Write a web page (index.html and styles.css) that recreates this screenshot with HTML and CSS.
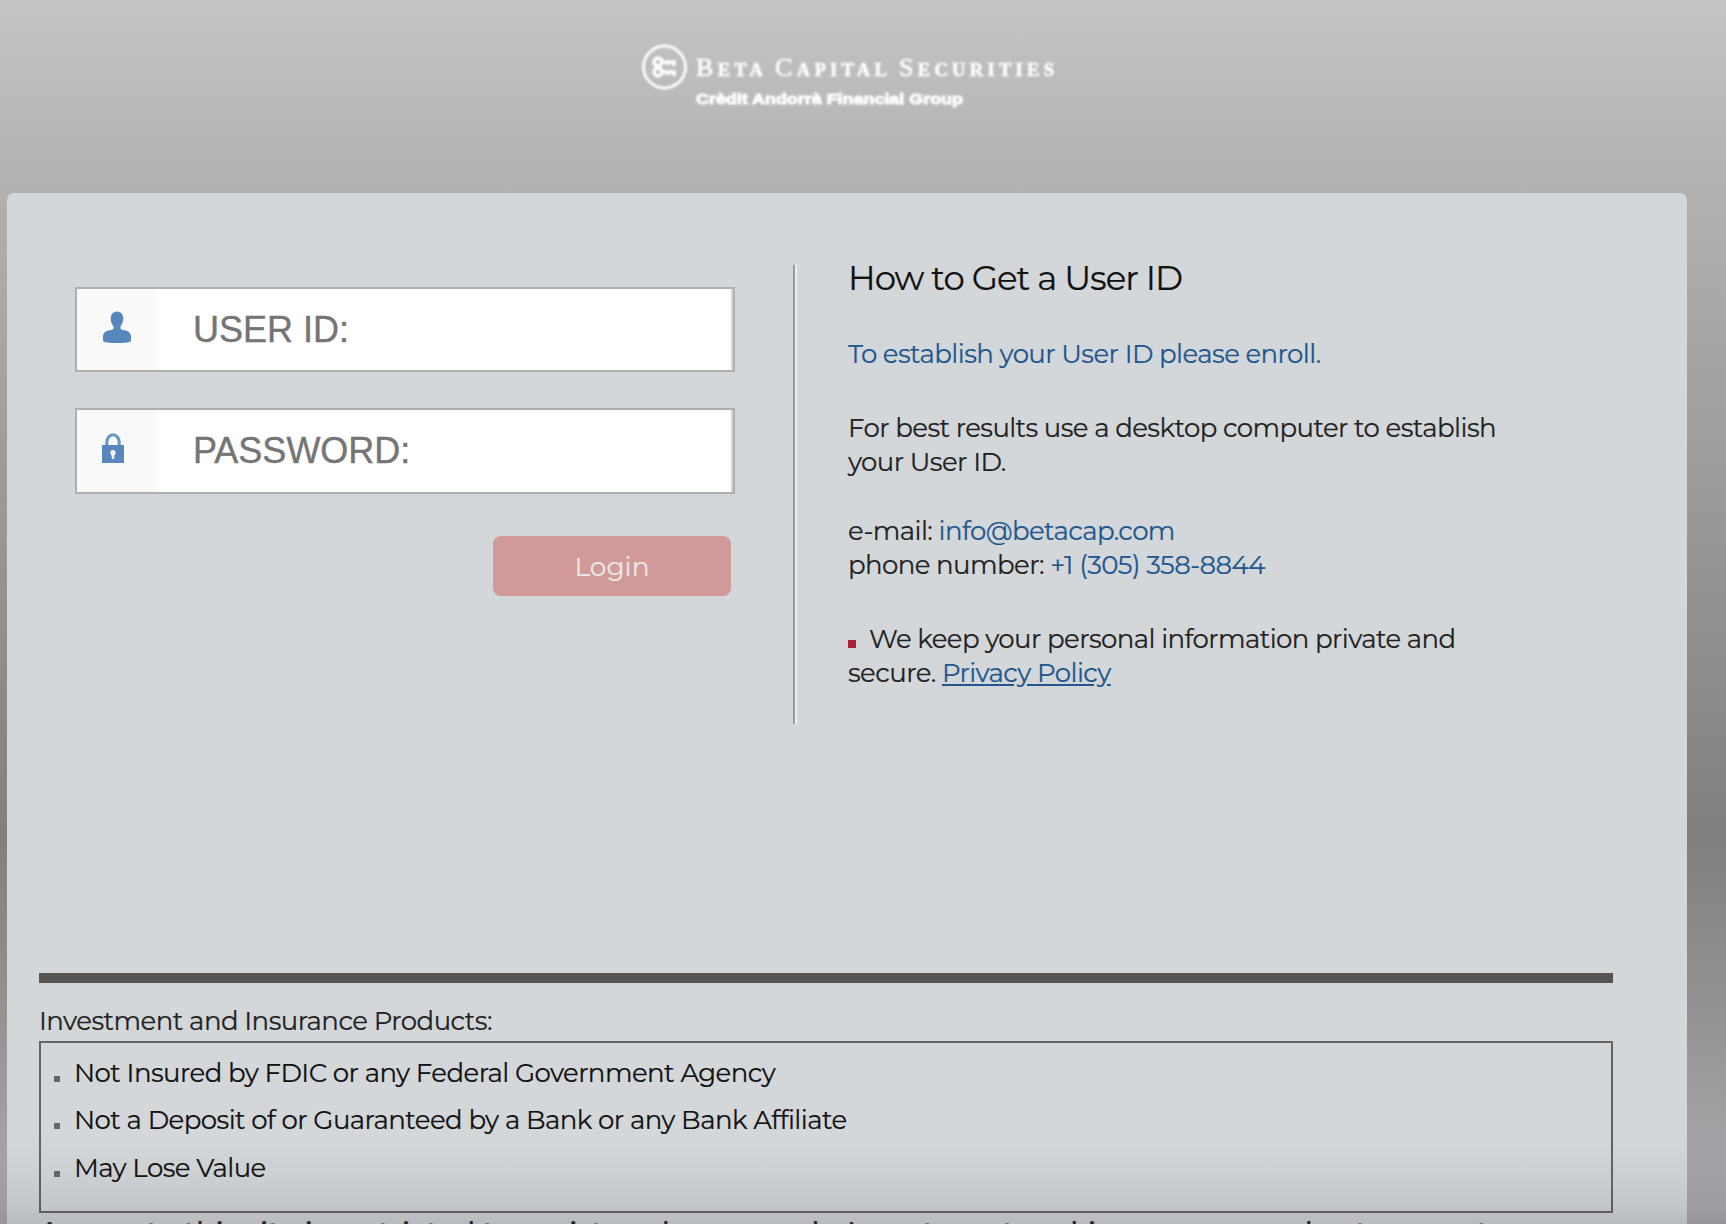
FILE: index.html
```
<!DOCTYPE html>
<html lang="en">
<head>
<meta charset="utf-8">
<title>Beta Capital Securities</title>
<link rel="stylesheet" href="styles.css">
</head>
<body>
<header class="masthead">
  <svg class="logo" width="420" height="70" viewBox="0 0 420 70" role="img" aria-label="Beta Capital Securities">
    <circle cx="24.5" cy="27" r="21" fill="none" stroke="#fff" stroke-width="2.8"/>
    <g fill="none" stroke="#fff" stroke-width="3.6">
      <circle cx="18" cy="22" r="4"/>
      <circle cx="18" cy="32" r="4"/>
      <path d="M22 22h14M22 32h14M28 22v3M34 22v4M28 32v3M34 32v4"/>
    </g>
    <text class="logo-name" x="56" y="36" textLength="358"><tspan class="cap">B</tspan>ETA <tspan class="cap">C</tspan>APITAL <tspan class="cap">S</tspan>ECURITIES</text>
    <text class="logo-group" x="56" y="64" textLength="267" lengthAdjust="spacingAndGlyphs">Crèdit Andorrà Financial Group</text>
  </svg>
</header>
<main class="panel">
  <div class="columns">
    <form class="login">
      <label class="field">
        <span class="field-icon">
          <svg width="30" height="33" viewBox="0 0 30 33"><path fill="#5787bd" d="M15 .5c3.800 0 6.300 3 6.300 7 0 3.400-1.300 6-2.800 7.700v2c0 1 .8 1.400 2.200 1.700 5.500 .8 8.300 2.500 8.300 6.500v4c0 2-6 2.600-14 2.600s-14-.6-14-2.600v-4c0-4 2.800-5.700 8.300-6.500 1.400-.3 2.200-.7 2.200-1.700v-2C10 13.500 8.700 10.900 8.700 7.500c0-4 2.500-7 6.300-7z"/></svg>
        </span>
        <input class="field-input" type="text" placeholder="USER ID:">
      </label>
      <label class="field field-password">
        <span class="field-icon">
          <svg width="22" height="30" viewBox="0 0 22 30"><path fill="none" stroke="#6a95c6" stroke-width="3" d="M4.800 12V9.200a6.200 7.400 0 0 1 12.400 0V12"/><path fill="#5787bd" d="M0 12h22v18H0z"/><path fill="#f4f6fa" d="M11 17a2.700 2.700 0 0 1 1.500 5l-.4 4h-2.200l-.4-4A2.700 2.700 0 0 1 11 17z"/></svg>
        </span>
        <input class="field-input" type="text" placeholder="PASSWORD:">
      </label>
      <button class="login-button" type="button">Login</button>
    </form>
    <section class="help">
      <h1>How to Get a User ID</h1>
      <p class="enroll"><a>To establish your User ID please enroll.</a></p>
      <p class="desktop">For best results use a desktop computer to establish<br>your User ID.</p>
      <p class="contact">e-mail: <a>info@betacap.com</a><br>phone number: <a>+1 (305) 358-8844</a></p>
      <p class="privacy"><i class="red-square"></i>We keep your personal information private and<br>secure. <a class="underlined">Privacy Policy</a></p>
    </section>
  </div>
  <footer class="disclosures">
    <p class="products">Investment and Insurance Products:</p>
    <ul class="notices">
      <li>Not Insured by FDIC or any Federal Government Agency</li>
      <li>Not a Deposit of or Guaranteed by a Bank or any Bank Affiliate</li>
      <li>May Lose Value</li>
    </ul>
    <p class="access">Access to this site is restricted to registered users and <span class="tail">Investment making <span class="tight">process and not account</span></span></p>
  </footer>
</main>
<div class="fade"></div>
</body>
</html>
```
FILE: styles.css
```
* { box-sizing: border-box; }

body {
  margin: 0;
  height: 1224px;
  overflow: hidden;
  display: flex;
  flex-direction: column;
  background: linear-gradient(#c4c4c4 0, #b1b1b1 193px, #808080 838px, #969698 1040px, #a5a5a9 1160px, #a9a9ad 1224px);
  color: #222;
  font: 26px/34px Montserrat, Inter, sans-serif;
  letter-spacing: -0.58px;
  -webkit-text-stroke: .2px;
}

p, h1, ul { margin: 0; padding: 0; font-weight: 400; }
a { color: #22568f; }

.masthead {
  height: 193px;
  flex: none;
  padding: 40px 0 0 640px;
}
.logo { display: block; filter: blur(.9px); overflow: visible; }
.logo-name {
  font: 700 18.500px "Liberation Serif", serif;
  fill: #fff;
  stroke: #fff;
  stroke-width: .6px;
  letter-spacing: 0;
}
.cap { font-size: 26px; font-weight: 400; }
.logo-group {
  font: 700 15.500px "Liberation Sans", sans-serif;
  fill: #fff;
  stroke: #fff;
  stroke-width: 1px;
  letter-spacing: 0;
}

.panel {
  flex: none;
  width: 1680px;
  height: 1031px;
  margin-left: 7px;
  overflow: hidden;
  background: #d3d7da;
  border-radius: 7px 7px 0 0;
}
.columns {
  display: flex;
  height: 780px;
  padding-top: 72px;
}
.login {
  width: 790px;
  height: 459px;
  padding: 22px 0 0 68px;
  border-right: 2px solid #efefef;
  box-shadow: inset -2px 0 #999;
  display: flex;
  flex-direction: column;
}
.field {
  display: flex;
  width: 660px;
  height: 85px;
  border: 2px solid #aeafb0;
  padding-right: 2px;
}
.field-password { height: 86px; margin-top: 36px; }
.field-icon {
  width: 79px;
  padding: 22px 0 0 25px;
  background: #f9f9f9;
}
.field-icon svg { display: block; }
.field-password .field-icon { padding-top: 23px; }
.field-input {
  flex: 1;
  min-width: 0;
  border: 0;
  outline: 0;
  padding: 1px 0 0 37px;
  background: #fff;
  font: 36px "Liberation Sans", Arial, sans-serif;
  letter-spacing: 0;
  -webkit-text-stroke: .4px #757575;
}
.field-password .field-input { padding: 0 0 1px 37px; }
.field-input::placeholder { color: #757575; opacity: 1; }
.login-button {
  width: 238px;
  height: 60px;
  margin: 42px 0 0 418px;
  border: 0;
  border-radius: 8px;
  background: #d19997;
  color: #e8e8e8;
  font: 26.500px Montserrat, Inter, sans-serif;
  padding: 1px 0 0;
}

.help { padding-left: 51px; }
.help h1 {
  color: #111;
  font-size: 34px;
  line-height: 40px;
  letter-spacing: -1px;
  margin-top: -7px;
}
.enroll { margin-top: 39px; }
.desktop { margin-top: 40px; }
.contact { margin-top: 35px; }
.privacy { margin-top: 40px; }
.underlined { text-decoration: underline; }
.red-square {
  display: inline-block;
  width: 8px;
  height: 8px;
  margin-right: 13px;
  background: #a9203b;
}

.disclosures { width: 1574px; margin-left: 32px; border-top: 10px solid #555; }
.products { padding-top: 21px; height: 58px; letter-spacing: -.54px; }
.notices {
  height: 172px;
  list-style: none;
  border: 2px solid #646464;
  padding-top: 13px;
  color: #111;
  letter-spacing: -.55px;
}
.notices li {
  height: 47px;
  display: flex;
}
.notices li:last-child { padding-top: 1px; }
.notices li::before {
  content: "";
  width: 6px;
  height: 6px;
  margin: 20px 14px 0 13px;
  background: #666;
}
.access {
  white-space: nowrap;
  padding-top: 3px;
  color: #222;
  font-size: 29px;
  font-weight: 500;
  letter-spacing: -.1px;
}
.tail { margin-left: 20px; }
.tight { letter-spacing: -.8px; }

.fade {
  position: absolute;
  left: 0;
  right: 0;
  top: 1134px;
  height: 90px;
  background: linear-gradient(rgba(62, 64, 70, 0), rgba(62, 64, 70, .04) 40%, rgba(62, 64, 70, .11) 82%, rgba(66, 60, 68, .15) 90%, rgba(66, 60, 68, .18));
}
```
